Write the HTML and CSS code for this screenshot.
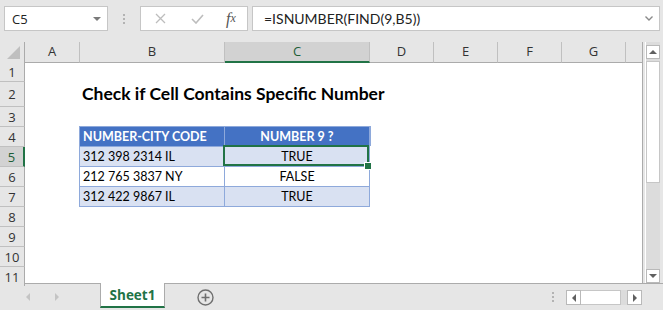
FILE: index.html
```html
<!DOCTYPE html>
<html lang="en">
<head>
	<meta charset="UTF-8">
	<title>Check if Cell Contains Specific Number</title>
	<link rel="stylesheet" href="styles.css">
</head>
<body>
<div class="app">
	<div class="formulaBar">
		<div class="nameBox"><span>C5</span><i class="dropArrow"></i></div>
		<div class="grip"><b></b><b></b><b></b></div>
		<div class="fxBox">
			<span class="slot cancel">
				<svg width="11" height="11" viewBox="0 0 11 11"><path d="M1 1L10 10M10 1L1 10" stroke="#bdbdbd" stroke-width="1.3" fill="none"/></svg>
			</span>
			<span class="slot enter">
				<svg width="13" height="10" viewBox="0 0 13 10"><path d="M1 5L5 9L12 1" stroke="#bdbdbd" stroke-width="1.6" fill="none"/></svg>
			</span>
			<span class="slot fx">f<small>x</small></span>
		</div>
		<div class="formula">
			<span>=ISNUMBER(FIND(9,B5))</span>
			<svg width="8" height="5" viewBox="0 0 8 5"><path d="M0.5 0.5L4 4L7.5 0.5" stroke="#8a8a8a" stroke-width="1.4" fill="none"/></svg>
		</div>
	</div>

	<div class="work">
		<div class="sheet">
			<div class="row hdr">
				<div class="corner"><svg width="14" height="13" viewBox="0 0 14 13"><path d="M13 0V13H0Z" fill="#bfbfbf"/></svg></div>
				<div class="colHead">A</div>
				<div class="colHead">B</div>
				<div class="colHead sel">C</div>
				<div class="colHead">D</div>
				<div class="colHead">E</div>
				<div class="colHead">F</div>
				<div class="colHead">G</div>
				<div class="colHead end"></div>
			</div>
			<div class="row"><div class="rowHead">1</div></div>
			<div class="row tall">
				<div class="rowHead">2</div>
				<div class="cell title">Check if Cell Contains Specific Number</div>
			</div>
			<div class="row"><div class="rowHead">3</div></div>
			<div class="row">
				<div class="rowHead">4</div>
				<div class="cell colB th first">NUMBER-CITY CODE</div>
				<div class="cell colC th">NUMBER 9 ?</div>
			</div>
			<div class="row">
				<div class="rowHead sel">5</div>
				<div class="cell colB band">312 398 2314 IL</div>
				<div class="cell colC band active">TRUE</div>
			</div>
			<div class="row">
				<div class="rowHead">6</div>
				<div class="cell colB">212 765 3837 NY</div>
				<div class="cell colC">FALSE</div>
			</div>
			<div class="row">
				<div class="rowHead">7</div>
				<div class="cell colB band">312 422 9867 IL</div>
				<div class="cell colC band">TRUE</div>
			</div>
			<div class="row"><div class="rowHead">8</div></div>
			<div class="row"><div class="rowHead">9</div></div>
			<div class="row"><div class="rowHead">10</div></div>
			<div class="row last"><div class="rowHead">11</div></div>
		</div>
		<div class="vscroll">
			<div class="sbtn"><i class="tri up"></i></div>
			<div class="vthumb"></div>
			<div class="sgap"></div>
			<div class="sbtn"><i class="tri down"></i></div>
		</div>
	</div>

	<div class="tabBar">
		<div class="tabNav">
			<i class="navArrow left"></i>
			<i class="navArrow right"></i>
		</div>
		<div class="tab">Sheet1</div>
		<div class="addSheet">
			<svg width="17" height="17" viewBox="0 0 17 17"><circle cx="8.5" cy="8.5" r="7.5" stroke="#6f6f6f" stroke-width="1.4" fill="none"/><path d="M8.5 4.5V12.5M4.5 8.5H12.5" stroke="#6f6f6f" stroke-width="1.6"/></svg>
		</div>
		<div class="grip bottomGrip"><b></b><b></b><b></b></div>
		<div class="hscroll">
			<div class="hbtn"><i class="tri left"></i></div>
			<div class="hthumb"></div>
			<div class="htrack"></div>
			<div class="hbtn"><i class="tri right"></i></div>
		</div>
	</div>
</div>
</body>
</html>
```

FILE: styles.css
```css
*{ margin: 0; padding: 0; box-sizing: border-box; }
body{ background: #e6e6e6; font-family: "Open Sans", "Noto Sans", sans-serif; }
.app{ width: 663px; height: 310px; overflow: hidden; }

/* formula bar */
.formulaBar{ height: 42px; display: flex; align-items: flex-start; padding: 6px 3px 0 4px; }
.nameBox{ width: 104px; height: 25px; background: #fff; border: 1px solid #c6c6c6; display: flex; align-items: center; justify-content: space-between; padding: 0 6px 0 7px; font-size: 13px; color: #222; }
.dropArrow{ border-left: 4px solid transparent; border-right: 4px solid transparent; border-top: 4px solid #7a7a7a; }
.grip{ width: 32px; height: 25px; display: flex; flex-direction: column; align-items: center; gap: 2px; padding-top: 8px; }
.grip b{ width: 2px; height: 2px; background: #b3b3b3; }
.fxBox{ width: 108px; height: 25px; background: #fff; border: 1px solid #c6c6c6; display: flex; align-items: center; }
.slot{ display: flex; justify-content: center; align-items: center; }
.cancel{ width: 38px; }
.enter{ width: 36px; }
.fx{ width: 32px; font-family: "Liberation Serif", serif; font-style: italic; font-size: 16px; color: #555; }
.fx small{ font-size: 12px; }
.formula{ flex: 1; margin-left: 4px; height: 25px; background: #fff; border: 1px solid #c6c6c6; display: flex; align-items: center; justify-content: space-between; padding: 0 6px 0 11px; font-family: Lato, "Open Sans", sans-serif; font-size: 14px; color: #222; }

/* sheet grid */
.work{ display: flex; height: 241px; }
.sheet{ width: 643px; background: #fff; border-right: 1px solid #ababab; }
.row{ display: grid; grid-template-columns: 25px 55px 145px 145px 64px 64px 64px 64px 1fr; height: 20px; }
.row.tall{ height: 25px; }
.row.last{ height: 16px; }
.hdr{ background: #e6e6e6; }
.corner{ border-right: 1px solid #ababab; border-bottom: 1px solid #ababab; display: flex; align-items: flex-end; justify-content: flex-end; padding: 0 3px 3px 0; }
.colHead{ border-right: 1px solid #c0c0c0; border-bottom: 1px solid #ababab; text-align: center; font-size: 13px; line-height: 19px; color: #333; }
.colHead.end{ border-right: none; }
.colHead.sel{ background: #d2d2d2; color: #1e5e38; border-bottom: 2px solid #217346; }
.rowHead{ background: #e6e6e6; border-right: 1px solid #ababab; border-bottom: 1px solid #c0c0c0; display: flex; align-items: center; justify-content: center; font-size: 13px; color: #333; }
.rowHead.sel{ background: #d2d2d2; color: #1e5e38; border-right: 2px solid #217346; }
.last .rowHead{ border-bottom: none; align-items: flex-start; padding-top: 1px; }

/* cells */
.cell{ font-family: Lato, "Open Sans", sans-serif; font-size: 12.5px; line-height: 19px; color: #000; white-space: nowrap; padding-left: 3px; }
.title{ grid-column: 3 / span 3; font-size: 17.5px; font-weight: bold; line-height: 24px; padding-left: 2px; }
.colB{ grid-column: 3; border-right: 1px solid #8ea9db; border-bottom: 1px solid #8ea9db; box-shadow: -1px 0 0 #8ea9db; }
.colC{ grid-column: 4; border-right: 1px solid #8ea9db; border-bottom: 1px solid #8ea9db; text-align: center; padding-left: 0; }
.th{ background: #4472c4; color: #fff; font-weight: bold; }
.th.first{ box-shadow: -1px 0 0 #8ea9db, 0 -1px 0 #8ea9db, -1px -1px 0 #8ea9db; }
.colC.th{ box-shadow: 0 -1px 0 #8ea9db, 1px -1px 0 #8ea9db; }
.band{ background: #d9e1f2; }
.active{ position: relative; z-index: 2; }
.active::before{ content: ""; position: absolute; left: -2px; top: -2px; right: 0; bottom: 0; border: 2px solid #217346; }
.active::after{ content: ""; position: absolute; right: -2px; bottom: -3px; width: 6px; height: 6px; background: #217346; outline: 1px solid #fff; }

/* vertical scrollbar */
.vscroll{ width: 15px; margin-left: 2px; padding-top: 3px; display: flex; flex-direction: column; background: #dcdcdc; border-left: 1px solid #fff; }
.sbtn{ height: 14px; background: #fff; border: 1px solid #b9b9b9; display: flex; align-items: center; justify-content: center; }
.vthumb{ height: 122px; margin-top: 2px; background: #fff; border: 1px solid #c6c6c6; }
.sgap{ flex: 1; }
.tri{ width: 0; height: 0; }
.tri.up{ border-left: 4px solid transparent; border-right: 4px solid transparent; border-bottom: 4px solid #606060; }
.tri.down{ border-left: 4px solid transparent; border-right: 4px solid transparent; border-top: 4px solid #606060; }
.tri.left{ border-top: 4px solid transparent; border-bottom: 4px solid transparent; border-right: 4px solid #606060; }
.tri.right{ border-top: 4px solid transparent; border-bottom: 4px solid transparent; border-left: 4px solid #606060; }

/* sheet tabs */
.tabBar{ height: 27px; border-top: 1px solid #ababab; display: flex; align-items: flex-start; }
.tabNav{ width: 100px; height: 26px; display: flex; align-items: center; padding-left: 26px; gap: 25px; }
.navArrow{ width: 0; height: 0; border-top: 4px solid transparent; border-bottom: 4px solid transparent; }
.navArrow.left{ border-right: 4px solid #c4c4c4; }
.navArrow.right{ border-left: 4px solid #c4c4c4; }
.tab{ width: 65px; height: 25px; margin-top: -1px; background: #fff; border-left: 1px solid #ababab; border-right: 1px solid #ababab; border-bottom: 2px solid #217346; text-align: center; font-size: 13.5px; font-weight: bold; line-height: 24px; color: #217346; }
.addSheet{ margin-left: 32px; padding-top: 5px; }
.bottomGrip{ margin-left: auto; width: 6px; height: 26px; padding-top: 8px; }
.hscroll{ display: flex; margin: 6px 21px 0 10px; height: 15px; }
.hbtn{ width: 15px; height: 15px; background: #fff; border: 1px solid #b9b9b9; display: flex; align-items: center; justify-content: center; }
.hthumb{ width: 40px; background: #fff; border: 1px solid #c6c6c6; border-left: none; }
.htrack{ width: 6px; background: #dcdcdc; }
```
